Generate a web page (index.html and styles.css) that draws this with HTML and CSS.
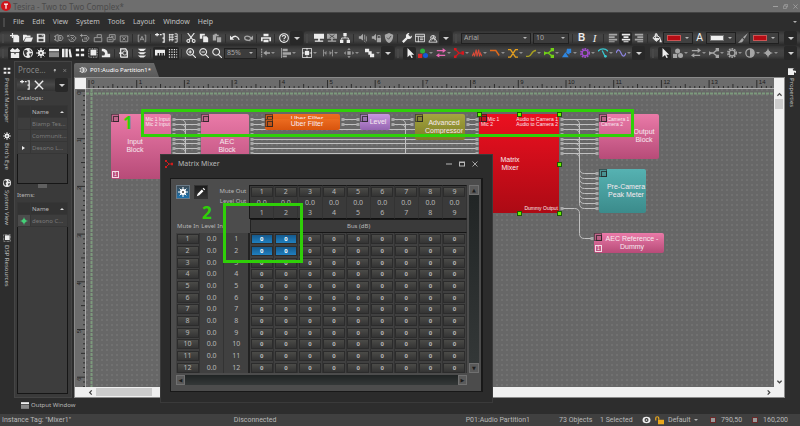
FILE: index.html
```html
<!DOCTYPE html>
<html lang="en">
<head>
  <meta charset="UTF-8">
  <meta name="viewport" content="width=device-width, initial-scale=1.0">
  <title>Tesira - Two to Two Complex*</title>
  <link rel="stylesheet" href="styles.css">
</head>
<body>
  <!-- Icon set -->
  <svg class="sprite" aria-hidden="true">
    <symbol id="new" viewBox="0 0 12 12"><path d="M4 2h5l2 2v7H4z"/><path d="M3 0v6M0 3h6" stroke="currentColor" stroke-width="1.5"/></symbol>
    <symbol id="open" viewBox="0 0 12 12"><path d="M0 2h4l1 1h4v2H3L1 9H0z"/><path d="M3.500 5.500H12L10 10.500H1.200z"/></symbol>
    <symbol id="save" viewBox="0 0 12 12"><path fill-rule="evenodd" d="M1 1h9l1 1v9H1zM3 2v3h6V2zM3 7v3h6V7z"/><path d="M7 2h1v2H7z"/></symbol>
    <symbol id="blk" viewBox="0 0 12 12"><path fill="none" stroke="currentColor" d="M0 4h2M0 8h2M2 3l3-1v8L2 9zM6 3h3l2 3-2 3H6zM8 4.500v3"/></symbol>
    <symbol id="blkx" viewBox="0 0 12 12"><path fill="none" stroke="currentColor" d="M0 2l3 3M3 2L0 5M4 3h4l3 3-3 4H4L2 7M5 5l3 3M8 5L5 8"/></symbol>
    <symbol id="blkr" viewBox="0 0 12 12"><path fill="none" stroke="currentColor" d="M0 3h4M2 1v4M4 3h4l3 3-3 4H3V7M6 5v3M8 5v3"/></symbol>
    <symbol id="unlock" viewBox="0 0 12 12"><path fill="none" stroke="currentColor" d="M1.500 5.500h9v5h-9zM5 5V2h5v3"/></symbol>
    <symbol id="windows" viewBox="0 0 12 12"><path fill="none" stroke="currentColor" d="M1.500 5.500h7v5h-7zM4 5V2h7v6H9M6 4h3M3 8h4"/></symbol>
    <symbol id="boxx" viewBox="0 0 12 12"><path fill="none" stroke="currentColor" d="M1.500 3.500h9v7h-9zM4 5l4 4M8 5L4 9"/></symbol>
    <symbol id="boxa" viewBox="0 0 12 12"><path fill="none" stroke="currentColor" d="M3 2.500H1.500v8H3M9 2.500h1.500v8H9M3.500 9L6 4l2.500 5M4.500 7.500h3"/></symbol>
    <symbol id="addline" viewBox="0 0 12 12"><path fill="none" stroke="currentColor" stroke-width="1.500" d="M0 2h5M2.500 0v4M6 2h2M9 1h2v10H9M9 6h2"/></symbol>
    <symbol id="matrixi" viewBox="0 0 12 12"><path fill="none" stroke="currentColor" d="M1 2h6M1 5h6M1 8h6M2 1v9M5 1v9M8 1h3v10H8M8 4h3M8 7h3"/></symbol>
    <symbol id="cut" viewBox="0 0 12 12"><path fill="none" stroke="currentColor" stroke-width="1.300" d="M2 0l6 8M10 0L4 8"/><g fill="none" stroke="currentColor" stroke-width="1.300"><circle cx="2.800" cy="9.500" r="1.700"/><circle cx="9.200" cy="9.500" r="1.700"/></g></symbol>
    <symbol id="copy" viewBox="0 0 12 12"><path d="M1 1h6v2H4v4H1zM5 4h4l2 2v5H5z"/></symbol>
    <symbol id="paste" viewBox="0 0 12 12"><path d="M1 2h2V1h3v1h2v2H5v5H1zM6 5h5v6H6z"/></symbol>
    <symbol id="undo" viewBox="0 0 12 12"><path d="M0 3v5h5z"/><path fill="none" stroke="currentColor" stroke-width="1.600" d="M2 6c3-3 7-3 9 2"/></symbol>
    <symbol id="redo" viewBox="0 0 12 12"><path d="M12 3v5H7z"/><path fill="none" stroke="currentColor" stroke-width="1.600" d="M10 6C7 3 2 3 2 6s3 3 7 3"/></symbol>
    <symbol id="print" viewBox="0 0 12 12"><path d="M3 1h6v3H3zM0 5h12v5h-2V7H2v3H0zM3 8h6v3H3z"/></symbol>
    <symbol id="help" viewBox="0 0 12 12"><circle cx="6" cy="6" r="5.200" fill="none" stroke="currentColor" stroke-width="1.300"/><path fill="none" stroke="currentColor" stroke-width="1.300" d="M4 4.500C4 2.500 8 2.500 8 4.600 8 6 6 5.800 6 7.500M6 8.500v1.200"/></symbol>
    <symbol id="pc" viewBox="0 0 12 12"><path d="M0 1h12v6H0zM5 7h2v2h4v1.500H1V9h4z"/></symbol>
    <symbol id="pcx" viewBox="0 0 12 12"><path d="M0 1h12v6H0zM5 7h2v2h4v1.500H1V9h4z"/><path d="M3 2l6 4M9 2L3 6" stroke="#444"/></symbol>
    <symbol id="net" viewBox="0 0 12 12"><path d="M4 0h4v4H4zM0 8h4v4H0zM8 8h4v4H8z"/><path fill="none" stroke="currentColor" d="M6 4v2M2 8V6h8v2"/></symbol>
    <symbol id="spk" viewBox="0 0 12 12"><path d="M1 4h2l3-3v8L3 7H1z"/><path fill="none" stroke="currentColor" d="M8 2v6M10 4v6M7 9l2 2"/></symbol>
    <symbol id="spkl" viewBox="0 0 12 12"><path d="M1 4h2l3-3v8L3 7H1zM7 6h5v5H7z"/><path fill="none" stroke="currentColor" d="M8 6V3h3v3"/></symbol>
    <symbol id="shield" viewBox="0 0 12 12"><path d="M6 0l5 2c0 5-1 8-5 10C2 10 1 7 1 2z"/><path fill="none" stroke="#444" d="M3.500 5.500l2 2 3-4"/></symbol>
    <symbol id="wrench" viewBox="0 0 12 12"><path d="M0 10l5-5c-1-3 1-5 4-5L7.500 2l2.500 2.500L12 3c0 3-2 5-5 4l-5 5z"/></symbol>
    <symbol id="grid" viewBox="0 0 12 12"><path fill="none" stroke="currentColor" d="M.5 1.500h11v9H.5zM.5 4h11M4 4v7M6 6h4M6 8h4"/></symbol>
    <symbol id="gauge" viewBox="0 0 12 12"><path fill="none" stroke="currentColor" d="M1 11l3-5h4l3 5zM3 6a3 3 0 1 1 6 0M6 3l2 6M4 9l2-3"/></symbol>
    <symbol id="left" viewBox="0 0 12 12"><path d="M1 1h10v2H1zM1 4h7v2H1zM1 7h10v2H1zM1 10h7v1H1z"/></symbol>
    <symbol id="center" viewBox="0 0 12 12"><path d="M1 1h10v2H1zM3 4h6v2H3zM1 7h10v2H1zM3 10h6v1H3z"/></symbol>
    <symbol id="right" viewBox="0 0 12 12"><path d="M1 1h10v2H1zM4 4h7v2H4zM1 7h10v2H1zM4 10h7v1H4z"/></symbol>
    <symbol id="bucket" viewBox="0 0 12 12"><path fill="none" stroke="currentColor" stroke-width="1.200" d="M5 2L1 6l4 4 5-4zM4 6V1h2v4"/><path d="M2 6h7l-4 4zM10 6l2 5H9z"/></symbol>
    <symbol id="brush" viewBox="0 0 12 12"><path d="M12 0L8 7 6 5zM5 6l2 2-2 3-5 1 2-2z"/></symbol>
    <symbol id="box" viewBox="0 0 12 12"><path d="M0 3l3-3 3 2 3-2 3 3-1 2H1zM1 6h4l1 2 1-2h4v6H1z"/></symbol>
    <symbol id="globe" viewBox="0 0 12 12"><circle cx="6" cy="6" r="6"/><path fill="#3b3b3b" d="M1 3l3-1 2 2-2 2 1 3-2 1-2-4zM8 1l3 4-3-1zM7 7l4-1-2 5z"/></symbol>
    <symbol id="burst" viewBox="0 0 12 12"><path stroke="currentColor" stroke-width="1.200" d="M6 0v12M0 6h12M2 2l8 8M10 2l-8 8"/><circle cx="6" cy="6" r="3.600"/><circle cx="6" cy="6" r="1.300" fill="#444"/></symbol>
    <symbol id="panel" viewBox="0 0 12 12"><path d="M0 1h12v3H0z"/><path fill="#888" d="M0 5h12v6H0z"/></symbol>
    <symbol id="books" viewBox="0 0 12 12"><path d="M0 1h3v10H0zM4 1h3v10H4zM8 2l2-1 2 10H9z"/></symbol>
    <symbol id="four" viewBox="0 0 12 12"><path d="M1 1h4v3H1zM7 1h4v3H7zM1 7h4v3H1zM7 7h4v3H7z"/></symbol>
    <symbol id="chip" viewBox="0 0 12 12"><path stroke="currentColor" stroke-dasharray="1 1" fill="none" d="M1 1h10v10H1z"/><path d="M3 2h7v7H3z"/></symbol>
    <symbol id="tray" viewBox="0 0 12 12"><path d="M1 1c5 0 7 2 7 6h3v4H1V9h3c2-3 0-5-3-5z"/></symbol>
    <symbol id="find" viewBox="0 0 12 12"><path fill="none" stroke="currentColor" stroke-width="1.500" d="M2 11V1h6l2 3v7H2M0 6h5"/><circle cx="7" cy="6" r="2.500" fill="#444" stroke="currentColor"/></symbol>
    <symbol id="layers" viewBox="0 0 12 12"><path d="M1 1h10L8 3.500H4zM1 5h10L8 7.500H4zM1 9h10l-3 2.500H4z"/></symbol>
    <symbol id="ruler" viewBox="0 0 12 12"><path d="M0 2h12v7h-1V6H9v3H8V6H6v3H5V6H3v3H0z"/></symbol>
    <symbol id="dots" viewBox="0 0 12 12"><path fill="none" stroke="currentColor" stroke-width="1.500" stroke-dasharray="1.500 1.500" d="M1 2h10M1 5h10M1 8h10M1 11h10"/></symbol>
    <symbol id="zin" viewBox="0 0 12 12"><path fill="none" stroke="currentColor" stroke-width="1.300" d="M5 .7a4 4 0 1 0 .01 0M8 8l4 4M3 4.700h4M5 2.700v4"/></symbol>
    <symbol id="zout" viewBox="0 0 12 12"><path fill="none" stroke="currentColor" stroke-width="1.300" d="M5 .7a4 4 0 1 0 .01 0M8 8l4 4M3 4.700h4"/></symbol>
    <symbol id="zoom" viewBox="0 0 12 12"><path fill="none" stroke="currentColor" stroke-width="1.300" d="M5 .7a4 4 0 1 0 .01 0M8 8l4 4"/></symbol>
    <symbol id="spread" viewBox="0 0 12 12"><path fill="none" stroke="currentColor" stroke-width="1.300" stroke-dasharray="2 1" d="M2 1v10"/><path d="M4 6l4-3v2h4v2H8v2z"/></symbol>
    <symbol id="alignl" viewBox="0 0 12 12"><path d="M0 0h1v12H0zM2 1h6v3H2zM2 5h10v3H2zM2 9h5v2H2z"/></symbol>
    <symbol id="centerbox" viewBox="0 0 12 12"><path fill="none" stroke="currentColor" d="M.5.5h11v11H.5zM6 0v3M6 9v3M0 6h3M9 6h3"/><path d="M3.500 3.500h5v5h-5z"/></symbol>
    <symbol id="width" viewBox="0 0 12 12"><path fill="none" stroke="currentColor" d="M.5 2v8M11.500 2v8M2 6h3M7 6h3M4 4L2 6l2 2M8 4l2 2-2 2"/></symbol>
    <symbol id="move" viewBox="0 0 12 12"><path d="M4 4h4v4H4zM6 0l2 2H4zM6 12l2-2H4zM0 6l2-2v4zM12 6l-2-2v4z"/></symbol>
    <symbol id="group" viewBox="0 0 12 12"><path d="M0 1h5v4H0zM6 7h5v4H6zM4 4h4v4H4z"/></symbol>
    <symbol id="pointer" viewBox="0 0 12 12"><path d="M3 0l8 8H7.500l2 3.500-1.800.5L6 8.500 3 11z"/></symbol>
    <symbol id="rgb" viewBox="0 0 12 12"><circle cx="5.500" cy="3.500" r="3" fill="#2eae3c"/><path fill="#d62828" d="M0 7h5v5H0z"/><circle cx="9" cy="9" r="3" fill="#1559d8"/></symbol>
    <symbol id="shapes" viewBox="0 0 12 12"><circle cx="5.500" cy="3.500" r="3"/><path d="M0 7h5v5H0z"/><circle cx="9" cy="9" r="3"/></symbol>
    <symbol id="swap" viewBox="0 0 12 12"><path d="M8 0l4 3-4 3V4H1V2.500h7zM4 6v2h7v1.500H4v2L0 9z"/></symbol>
    <symbol id="mix" viewBox="0 0 12 12"><path fill="none" stroke="currentColor" stroke-width="1.500" d="M1 1l5 5-5 5M6 6h6"/><path d="M0 0h3v3H0zM0 9h3v3H0zM9 4h3v4H9z"/></symbol>
    <symbol id="eq" viewBox="0 0 12 12"><path fill="none" stroke="currentColor" stroke-width="1.300" d="M0 10l2-4 1 4 2-8 1 8 2-8 1 8 1-4 2 4"/></symbol>
    <symbol id="slope" viewBox="0 0 12 12"><path fill="none" stroke="currentColor" stroke-width="1.700" d="M0 3h7l4 6"/></symbol>
    <symbol id="cross" viewBox="0 0 12 12"><path fill="none" stroke="currentColor" stroke-width="1.600" d="M0 2h3l6 9h3M0 11h3l6-9h3"/></symbol>
    <symbol id="curve" viewBox="0 0 12 12"><path fill="none" stroke="currentColor" stroke-width="1.600" d="M0 10h3c4 0 3-7 9-7"/></symbol>
    <symbol id="split" viewBox="0 0 12 12"><path fill="none" stroke="currentColor" stroke-width="1.600" d="M0 6h5l5-4M5 6l5 4"/><path d="M8 0h4v4H8zM8 8h4v4H8zM0 4l4 2-4 3z"/></symbol>
    <symbol id="pipe" viewBox="0 0 12 12"><path d="M0 11l4-6 4 6z"/><path d="M5 6l1-5h5v5H9v2z"/></symbol>
    <symbol id="cog" viewBox="0 0 12 12"><circle cx="6" cy="6" r="5" fill="none" stroke="currentColor" stroke-width="2" stroke-dasharray="2 1.200"/><circle cx="6" cy="6" r="3.500" fill="none" stroke="currentColor" stroke-width="1.600"/></symbol>
    <symbol id="meter" viewBox="0 0 12 12"><path fill="none" stroke="currentColor" stroke-width="1.500" d="M0 4c3-4 9-4 12 0M5 3l4 8"/><circle cx="9" cy="10" r="1.500"/></symbol>
    <symbol id="wave" viewBox="0 0 12 12"><path fill="none" stroke="currentColor" stroke-width="1.500" d="M0 6c2-5 4-5 6 0s4 5 6 0"/></symbol>
    <symbol id="half" viewBox="0 0 12 12"><circle cx="6" cy="6" r="5" fill="none" stroke="currentColor" stroke-width="1.500"/><path d="M6 1a5 5 0 0 1 0 10z"/></symbol>
    <symbol id="star" viewBox="0 0 12 12"><path d="M6 0l1.500 4.500L12 6 7.500 7.500 6 12 4.500 7.500 0 6l4.500-1.500z"/><circle cx="6" cy="6" r="3"/></symbol>
    <symbol id="pencil" viewBox="0 0 12 12"><path d="M1 11l1-3 5-5 2 2-5 5zM8 2l1-1 2 2-1 1z"/></symbol>
    <symbol id="pin" viewBox="0 0 12 12"><path d="M3 1h6v6h2v1H7v4H5V8H1V7h2z"/></symbol>
    <symbol id="close" viewBox="0 0 12 12"><path fill="none" stroke="currentColor" stroke-width="1.700" d="M1 1l10 10M11 1L1 11"/></symbol>
    <symbol id="min" viewBox="0 0 12 12"><path d="M0 5h12v2H0z"/></symbol>
    <symbol id="max" viewBox="0 0 12 12"><path fill-rule="evenodd" d="M0 1h12v10H0zM2 4v5h8V4z"/></symbol>
    <symbol id="restore" viewBox="0 0 12 12"><path fill="none" stroke="currentColor" stroke-width="1.500" d="M1 4.500h7V11H1zM4 4V1h7v6H8"/></symbol>
    <symbol id="props" viewBox="0 0 12 12"><path d="M0 2h9v3l3 1v3L9 8v4H0z"/><path fill="#333" d="M7 4l3-4 2 2-3 4z"/></symbol>
    <symbol id="eye" viewBox="0 0 12 12"><ellipse cx="6" cy="6" rx="6" ry="5"/><circle cx="6" cy="6" r="3" fill="#3a3a3a"/><circle cx="6" cy="6" r="1.300"/></symbol>
    <symbol id="padlock" viewBox="0 0 12 12"><path fill="none" stroke="currentColor" stroke-width="1.600" d="M1 6V2.500Q1 1 3 1t2 1.500V5"/><path d="M4 5h8v6H4z"/></symbol>
    <symbol id="up" viewBox="0 0 12 12"><path fill="none" stroke="currentColor" stroke-width="3" d="M1 9l5-5 5 5"/></symbol>
    <symbol id="down" viewBox="0 0 12 12"><path fill="none" stroke="currentColor" stroke-width="3" d="M1 4l5 5 5-5"/></symbol>
    <symbol id="lt" viewBox="0 0 12 12"><path fill="none" stroke="currentColor" stroke-width="3" d="M9 1L4 6l5 5"/></symbol>
    <symbol id="gt" viewBox="0 0 12 12"><path fill="none" stroke="currentColor" stroke-width="3" d="M4 1l5 5-5 5"/></symbol>
  </svg>

  <header class="titlebar">
    <span class="logo"><svg viewBox="0 0 10 10"><circle cx="5" cy="5" r="5" fill="#d0141a"/><path fill="#fff" d="M3 2.500h4v1.200H5.600v4H4.400v-4H3z"/></svg></span>
    <span class="app-title">Tesira - Two to Two Complex*</span>
    <button aria-label="Minimize"><svg><use href="#min"/></svg></button>
    <button aria-label="Restore"><svg><use href="#restore"/></svg></button>
    <button aria-label="Close"><svg><use href="#close"/></svg></button>
  </header>

  <nav class="menubar">
    <i class="grip"></i>
    <button>File</button><button>Edit</button><button>View</button><button>System</button><button>Tools</button><button>Layout</button><button>Window</button><button>Help</button>
    <span class="caret"></span>
  </nav>

  <!-- data-icons: "|" separator, "*" toggled on, "+" has a drop arrow, "~" dimmed -->
  <div class="toolbar">
    <div class="group">
      <i class="grip"></i>
      <div class="tools" data-icons="new open save | ~blk ~blkx ~blkr ~unlock ~windows ~boxx | ~boxa | addline matrixi | cut copy ~paste | undo ~redo | print | help"></div>
      <button class="more" aria-label="More file tools"></button>
    </div>
    <div class="group">
      <i class="grip"></i>
      <div class="tools" data-icons="pc ~pcx net | ~spk ~spkl ~shield | wrench grid gauge"></div>
      <button class="more" aria-label="More system tools"></button>
    </div>
    <div class="group fill">
      <i class="grip"></i>
      <span class="combo font"><select aria-label="Font"><option>Arial</option></select></span>
      <span class="combo size"><select aria-label="Size"><option>10</option></select></span>
      <i class="sep"></i>
      <button class="tool letter"><b>B</b></button>
      <button class="tool letter serif"><i>I</i></button>
      <div class="tools" data-icons="| ~left *center ~right | bucket"></div>
      <button class="swatch" aria-label="Fill color"><span class="red"></span></button>
      <button class="tool letter">A</button>
      <button class="swatch" aria-label="Text color"><span class="white"></span></button>
      <div class="tools" data-icons="~brush"></div>
      <button class="swatch" aria-label="Line color"><span class="red"></span></button>
      <button class="more" aria-label="More format tools"></button>
    </div>
  </div>
  <div class="toolbar objects-bar">
    <div class="group">
      <i class="grip"></i>
      <div class="tools" data-icons="*box *globe *burst *panel *books *four *chip tray | find | layers | *ruler *dots | zin zout zoom"></div>
      <span class="combo zoomlevel"><select aria-label="Zoom"><option>85%</option></select></span>
      <div class="tools layout" data-icons="~+spread ~+alignl +centerbox ~+width ~+move +group"></div>
      <button class="more" aria-label="More layout tools"></button>
    </div>
    <div class="group">
      <i class="grip"></i>
      <div class="tools" data-icons="*pointer +rgb +swap:pink +mix:red +eq:tomato +slope:orange +cross:amber +curve:olive +split:lime +pipe:blue +cog:purple +meter:cyan +wave:violet"></div>
      <button class="more" aria-label="More objects"></button>
    </div>
    <div class="group fill">
      <i class="grip"></i>
      <div class="tools" data-icons="*pointer ~+shapes ~+swap ~+split ~+cog ~+half ~+star"></div>
      <button class="more" aria-label="More controls"></button>
    </div>
  </div>

  <div class="workspace">
    <nav class="side left">
      <button><svg><use href="#four"/></svg>Preset Manager</button>
      <button><svg><use href="#burst"/></svg>Bird's Eye</button>
      <button><svg><use href="#globe"/></svg>System View</button>
      <button><svg><use href="#chip"/></svg>DSP Resources</button>
    </nav>

    <aside class="library">
      <header><span>Proce...</span><svg><use href="#pin"/></svg><svg><use href="#close"/></svg></header>
      <div class="library-tools">
        <button class="tool" aria-label="Add"><svg><use href="#addline"/></svg></button>
        <button class="tool" aria-label="Remove"><svg><use href="#close"/></svg></button>
        <button class="more" aria-label="More"></button>
      </div>
      <h2>Catalogs:</h2>
      <table class="list catalogs">
        <tr><th></th><th>Name <i class="sort"></i></th></tr>
        <tr><td></td><td>Biamp Tes...</td></tr>
        <tr><td></td><td>Communit...</td></tr>
        <tr><td><i class="play"></i></td><td>Desono L...</td></tr>
        <tr class="rest"><td></td><td></td></tr>
      </table>
      <i class="splitter"></i>
      <h2>Items:</h2>
      <table class="list items">
        <tr><th></th><th>Name <i class="sort"></i></th></tr>
        <tr><td class="mark"><svg><use href="#star"/></svg></td><td>desono C...</td></tr>
        <tr class="rest"><td></td><td></td></tr>
      </table>
    </aside>

    <main>
      <div class="tabs"><button class="tab"><svg><use href="#blk"/></svg>P01:Audio Partition1*</button></div>
      <div class="editor">
        <div class="corner"></div>
        <svg class="ruler-x"></svg>
        <div class="filler"></div>
        <svg class="ruler-y"></svg>
        <div class="canvas">
          <svg class="wires"></svg>
          <div class="block pink input"><i class="badge"></i><small>Mic 1 Input<br>Mic 2 Input</small><p>Input<br>Block</p><i class="count">1</i></div>
          <div class="block pink aec"><i class="badge"></i><p>AEC<br>Block</p></div>
          <div class="block orange uber-back"><i class="badge"></i><p>Uber Filter</p></div>
          <div class="block orange uber"><i class="badge"></i><p>Uber Filter</p></div>
          <div class="block purple level"><i class="badge"></i><p>Level</p></div>
          <div class="block olive compressor"><i class="badge"></i><p>Advanced<br>Compressor</p></div>
          <div class="block red matrix"><i class="badge"></i><small class="ins">&emsp;&nbsp;Mic 1<br>Mic 2</small><small>Audio to Camera 1<br>Audio to Camera 2</small><p>Matrix<br>Mixer</p><small class="dummy">Dummy Output</small>
            <b class="handle nw"></b><b class="handle n"></b><b class="handle ne"></b><b class="handle e"></b><b class="handle se"></b><b class="handle s"></b>
          </div>
          <div class="block pink output"><i class="badge"></i><small class="ins">&emsp;&nbsp;Camera 1<br>Camera 2</small><p>Output<br>Block</p></div>
          <div class="block teal peak"><i class="badge"></i><p>Pre-Camera<br>Peak Meter</p></div>
          <div class="block pink ref"><i class="badge"></i><p>AEC Reference -<br>Dummy</p><i class="count">1</i></div>
        </div>
        <div class="vscroll"><svg><use href="#up"/></svg><i></i><svg class="end"><use href="#down"/></svg></div>
        <div class="hscroll"><svg><use href="#lt"/></svg><i></i><svg class="end"><use href="#gt"/></svg></div>
      </div>

      <section class="dialog">
        <header>
          <svg class="mix-icon"><use href="#mix"/></svg><h1>Matrix Mixer</h1>
          <button aria-label="Minimize"><svg><use href="#min"/></svg></button>
          <button aria-label="Maximize"><svg><use href="#max"/></svg></button>
          <button aria-label="Close"><svg><use href="#close"/></svg></button>
        </header>
        <div class="dialog-body">
          <table class="mixer">
            <colgroup><col><col><col class="wide"><col span="9"></colgroup>
            <thead>
              <tr class="r-mute">
                <th colspan="3" rowspan="3" class="head">
                  <div>
                    <button class="square on" aria-label="Settings"><svg><use href="#burst"/></svg></button>
                    <button class="square" aria-label="Edit"><svg><use href="#pencil"/></svg></button>
                    <span>Mute Out<br>Level Out</span>
                  </div>
                </th>
              </tr>
              <tr class="r-level"></tr>
              <tr class="r-num"></tr>
              <tr class="r-bus"><th class="side-head">Mute In</th><th class="side-head">Level In</th><th class="side-head"></th><th colspan="9" class="bus">Bus (dB)</th></tr>
            </thead>
            <tbody></tbody>
          </table>
          <div class="bar vertical"><span>▲</span><span>▼</span></div>
          <div class="bar"><span>◀</span><span>▶</span></div>
        </div>
      </section>

      <div class="note note-1"></div><b class="note-label label-1">1</b>
      <div class="note note-2"></div><b class="note-label label-2">2</b>
    </main>

    <nav class="side right">
      <button><svg><use href="#props"/></svg>Properties</button>
    </nav>
  </div>

  <div class="dock"><button><svg><use href="#panel"/></svg>Output Window</button></div>

  <footer class="status">
    <span class="tag">Instance Tag: "Mixer1"</span>
    <span class="state">Disconnected</span>
    <span class="part">P01:Audio Partition1</span>
    <span class="objects">73 Objects</span>
    <span class="selected">1 Selected</span>
    <span class="layer"><svg class="eye"><use href="#eye"/></svg><svg class="lock"><use href="#padlock"/></svg>Default <i class="caret"></i></span>
    <span class="pos"><i class="dot"></i>790,50</span>
    <span class="dim"><i class="dot"></i>160,200</span>
  </footer>

  <script src="script.js"></script>
</body>
</html>
```

FILE: styles.css
```css
* {
  box-sizing: border-box;
}
body {
  margin: 0;
  min-height: 100vh;
  display: flex;
  flex-direction: column;
  background: #2d2d2d;
  color: #b8b8b8;
  font: 6px/8px "Noto Sans", "Open Sans", sans-serif;
  overflow: hidden;
}
button {
  background: none;
  border: 0;
  padding: 0;
  color: inherit;
  font: inherit;
}
svg {
  fill: currentColor;
  display: block;
}
.sprite {
  position: absolute;
  width: 0;
  height: 0;
}
.grip {
  width: 2px;
  height: 9px;
  background: #484848;
}
.caret {
  border: 2px solid transparent;
  border-top: 2px solid #b0b0b0;
  border-bottom: 0;
}

/* Title and menu */
.titlebar {
  height: 12px;
  background: #6e6e6e;
  display: flex;
  align-items: center;
  gap: 5px;
  padding: 0 2px 0 1px;
}
.titlebar svg {
  width: 5px;
  height: 5px;
  color: #aaa;
}
.titlebar .logo svg {
  width: 10px;
  height: 10px;
}
.app-title {
  flex: 1;
  margin-left: -3px;
  padding-top: 1px;
  font-size: 8px;
  color: #4b4b4b;
}
.menubar {
  height: 19px;
  display: flex;
  align-items: center;
  gap: 8px;
  padding: 0 3px;
  font-size: 7px;
  color: #c2c2c2;
  border-top: 1px solid #444;
}
.menubar .caret {
  margin-left: auto;
}

/* Toolbars */
.toolbar {
  height: 15px;
  display: flex;
  gap: 1px;
}
.objects-bar .fill {
  margin-left: 4px;
}
.group {
  height: 14px;
  display: flex;
  align-items: center;
  background: linear-gradient(#333, #444 30%, #414141 70%, #2a2a2a);
  border-radius: 3px;
}
.group .grip {
  margin: 0 4px 0 2px;
}
.group.fill {
  flex: 1;
}
.tools {
  display: flex;
  align-items: center;
}
.layout {
  width: 123px;
  justify-content: space-between;
}
.tool {
  width: 13px;
  height: 13px;
  display: flex;
  align-items: center;
  justify-content: center;
  color: #ececec;
}
.tool svg {
  width: 10px;
  height: 10px;
}
.tool.dim {
  color: #a6a6a6;
}
.tool.on {
  background: #262626;
  border-radius: 2px;
}
.tool.drop {
  width: 18px;
  justify-content: space-between;
  padding: 0 1px 0 2px;
}
.tool.letter {
  font: 10px/12px "Liberation Sans", Arial, sans-serif;
}
.tool.serif {
  font-family: "Liberation Serif", serif;
  font-size: 11px;
}
.tool .caret {
  border-width: 2px 2px 0;
  opacity: .7;
}
.pink-icon { color: #e868b4; }
.red-icon { color: #d8161c; }
.tomato-icon { color: #d84a38; }
.orange-icon { color: #e06a1c; }
.amber-icon { color: #e6a01e; }
.olive-icon { color: #a8a020; }
.lime-icon { color: #72d018; }
.blue-icon { color: #2f86e0; }
.purple-icon { color: #a44cd0; }
.cyan-icon { color: #38c8d0; }
.violet-icon { color: #8c84e0; }
.sep {
  width: 1px;
  height: 9px;
  margin: 0 2px;
  background: #2e2e2e;
}
.more {
  width: 13px;
  height: 14px;
  background: #282828;
  border-radius: 2px;
  display: flex;
  align-items: center;
  justify-content: center;
}
.more::after {
  content: "";
  border: 3px solid transparent;
  border-top: 3px solid #d0d0d0;
  border-bottom: 0;
}
.group.fill .more {
  margin-left: auto;
  margin-right: 3px;
}
.combo {
  position: relative;
  height: 11px;
  border: 1px solid #202020;
  background: #3c3c3c;
}
.combo::after {
  content: "";
  position: absolute;
  right: 3px;
  top: 3px;
  border: 2px solid transparent;
  border-top: 2px solid #b8b8b8;
  border-bottom: 0;
}
.combo select {
  appearance: none;
  width: 100%;
  height: 9px;
  display: block;
  border: 0;
  background: none;
  color: #a8a8a8;
  font: 7px/8px "Noto Sans", sans-serif;
  padding: 0 2px;
}
.font { width: 70px; margin-right: 2px; }
.size { width: 36px; margin-right: 1px; }
.zoomlevel { width: 33px; margin: 0 1px; }
.swatch {
  flex: none;
  width: 30px;
  height: 12px;
  border: 1px solid #202020;
  background: #404040;
  display: flex;
  align-items: center;
  justify-content: space-between;
  padding: 0 3px;
}
.swatch::after {
  content: "";
  border: 2px solid transparent;
  border-top: 2px solid #b8b8b8;
  border-bottom: 0;
}
.swatch span {
  width: 14px;
  height: 6px;
  border: 1px solid #777;
}
.swatch .red { background: #b40c14; border-color: #c55; }
.swatch .white { background: #f0f0f0; }

/* Workspace */
.workspace {
  flex: 1;
  display: flex;
}
.side {
  width: 14px;
  display: flex;
  flex-direction: column;
  padding-top: 6px;
  gap: 9px;
}
.side button {
  writing-mode: vertical-rl;
  display: flex;
  align-items: center;
  gap: 3px;
  width: 13px;
}
.side svg {
  width: 8px;
  height: 8px;
  color: #eee;
}
.right {
  width: 15px;
}
.library {
  width: 58px;
  border: 1px solid #454545;
  background: #3a3a3a;
  display: flex;
  flex-direction: column;
  padding: 0 3px 3px 2px;
}
.library > header {
  height: 16px;
  display: flex;
  align-items: center;
  gap: 7px;
  font-size: 8px;
  color: #858585;
  background: #333;
  margin: 0 -3px 0 -2px;
  padding: 0 4px 0 3px;
}
.library > header span { flex: 1; }
.library > header svg {
  width: 5px;
  height: 5px;
  color: #aaa;
}
.library-tools {
  height: 13px;
  display: flex;
  background: linear-gradient(#333, #484848, #333);
}
.library-tools .more { margin-left: auto; }
.library-tools .tool { margin-left: 1px; }
.library h2 {
  margin: 3px 0;
  font: inherit;
}
.list {
  width: 100%;
  table-layout: fixed;
  border-collapse: collapse;
  border: 1px solid #161616;
  background: #3d3d3d;
  color: #7a7a7a;
}
.list th, .list td {
  height: 12px;
  padding: 0 0 0 1px;
  text-align: left;
  font-weight: normal;
  white-space: nowrap;
  border: 1px solid #363636;
}
.list th {
  background: #333;
  color: #bababa;
}
.list th:first-child, .list td:first-child {
  width: 13px;
}
.list .rest td { border: 0; height: auto; }
.catalogs { height: 79px; }
.items { flex: 1; height: 195px; }
.sort {
  float: right;
  margin: 3px 3px 0 0;
  border: 2px solid transparent;
  border-bottom: 2px solid #ddd;
  border-top: 0;
}
.play {
  display: block;
  margin-left: 3px;
  width: 0;
  border: 2px solid transparent;
  border-left: 3px solid #eee;
  border-right: 0;
}
.list .mark { background: #4b4b4b; }
.mark svg {
  width: 8px;
  height: 8px;
  margin-left: 1px;
  color: #45d078;
}
.splitter {
  width: 9px;
  height: 4px;
  flex: none;
  margin: 0 auto;
  background: #606060;
}

/* Editor */
main {
  position: relative;
  flex: 1;
  display: flex;
  flex-direction: column;
  margin-left: 2px;
}
.tabs { height: 16px; }
.tab {
  height: 14px;
  margin-top: 2px;
  padding: 0 8px 0 5px;
  display: flex;
  align-items: center;
  gap: 2px;
  background: linear-gradient(#696969, #5a5a5a);
  clip-path: polygon(0 0, 94% 0, 100% 100%, 0 100%);
  border-radius: 2px 0 0 0;
  color: #fff;
}
.tab svg {
  width: 9px;
  height: 8px;
}
.editor {
  flex: 1;
  display: grid;
  grid-template: 11px 1fr 10px / 11px 1fr 10px;
  border: 1px solid #8a8a8a;
}
.corner, .filler {
  background: #f0f0f0;
}
.ruler-x, .ruler-y {
  width: 100%;
  height: 100%;
  background: #6c6c6c;
  stroke: #2c2c2c;
  overflow: hidden;
}
.ruler-x { border-bottom: 1px solid #aaa; }
.ruler-y { border-right: 1px solid #aaa; }
.ruler-x text, .ruler-y text {
  font: 6px "Liberation Sans", Arial, sans-serif;
  fill: #1c1c1c;
  stroke: none;
}
.canvas {
  position: relative;
  overflow: hidden;
  background-color: #676767;
  background-image: radial-gradient(circle at 1px 1px, #717171 1px, transparent 1px);
  background-size: 5px 5px;
}
.wires {
  position: absolute;
  width: 100%;
  height: 100%;
}
.vscroll, .hscroll {
  display: flex;
  align-items: center;
  background: #f0f0f0;
  color: #444;
}
.vscroll {
  flex-direction: column;
  padding: 3px 0;
}
.hscroll {
  grid-column: 1 / 4;
  padding: 0 13px;
}
.vscroll svg, .hscroll svg {
  width: 5px;
  height: 5px;
}
.vscroll i {
  width: 8px;
  height: 10px;
  margin-top: 2px;
  background: #cdcdcd;
}
.hscroll i {
  width: 56px;
  height: 8px;
  margin-left: 3px;
  background: #cdcdcd;
}
.vscroll .end { margin-top: auto; }
.hscroll .end { margin-left: auto; }

/* Diagram blocks */
.block {
  position: absolute;
  border-radius: 2px;
  color: #f8eaf0;
  font: 7px/8px "Liberation Sans", Arial, sans-serif;
}
.block p {
  position: absolute;
  margin: 0;
  text-align: center;
  white-space: nowrap;
  transform: translate(-50%, -50%);
}
.block small {
  position: absolute;
  top: 3px;
  right: 1px;
  font-size: 5px;
  line-height: 5px;
  text-align: right;
  white-space: nowrap;
}
.block .ins {
  right: auto;
  left: 2px;
  text-align: left;
}
.block .dummy {
  top: auto;
  bottom: 2px;
}
.badge {
  position: absolute;
  left: 0;
  top: 0;
  width: 8px;
  height: 8px;
  border: 1px solid #2228;
  background: #2223;
}
.badge::after {
  content: "";
  position: absolute;
  left: 1px;
  top: 1px;
  width: 4px;
  height: 4px;
  border: 1px solid #222b;
}
.count {
  position: absolute;
  left: 1px;
  bottom: 1px;
  width: 7px;
  height: 7px;
  border: 1px solid #f4dce6;
  font: 5px/5px "Liberation Sans", sans-serif;
  text-align: center;
}
.pink { background: linear-gradient(#ea7aa8, #b74b78); }
.orange { background: linear-gradient(#ec6c20, #d8540e); }
.purple { background: linear-gradient(#c896e0, #9464b0); }
.olive { background: linear-gradient(#a4a440, #7c7c24); }
.block.red { background: linear-gradient(#ec1020, #ac0a14); border-radius: 0; }
.teal { background: linear-gradient(#56b2b2, #3b8b8b); }
.input { left: 25px; top: 25px; width: 60px; height: 65px; }
.input p { left: 24px; top: 32px; }
.aec { left: 115px; top: 25px; width: 48px; height: 65px; }
.aec p { left: 26px; top: 32px; }
.uber-back { left: 179px; top: 25px; width: 75px; height: 15px; }
.uber { left: 179px; top: 30px; width: 75px; height: 11px; }
.uber-back p, .uber p { left: 42px; top: 5px; }
.level { left: 274px; top: 25px; width: 30px; height: 16px; }
.level p { left: 18px; top: 8px; }
.compressor { left: 329px; top: 25px; width: 50px; height: 26px; }
.compressor p { left: 29px; top: 13px; }
.matrix { left: 393px; top: 25px; width: 80px; height: 99px; }
.matrix p { left: 31px; top: 50px; }
.output { left: 513px; top: 25px; width: 60px; height: 45px; }
.output p { left: 45px; top: 22px; }
.peak { left: 513px; top: 80px; width: 47px; height: 44px; }
.peak p { left: 27px; top: 22px; }
.ref { left: 508px; top: 144px; width: 70px; height: 20px; }
.ref p { left: 38px; top: 10px; }
.handle {
  position: absolute;
  width: 5px;
  height: 5px;
  margin: -2px;
  background: #6cf000;
  border: 1px solid #1a5a08;
}
.nw { left: 0; top: 0; }
.n { left: 50%; top: 0; }
.ne { left: 100%; top: 0; }
.e { left: 100%; top: 50%; }
.se { left: 100%; top: 100%; }
.s { left: 50%; top: 100%; }

/* Matrix mixer dialog */
.dialog {
  position: absolute;
  left: 86px;
  top: 93px;
  width: 333px;
  padding: 0 9px 10px;
  background: #2b2b2b;
  border: 1px solid #3a3a3a;
}
.dialog > header {
  height: 23px;
  display: flex;
  align-items: center;
  gap: 7px;
  padding: 0 5px 5px 0;
}
.dialog > header svg {
  width: 6px;
  height: 6px;
}
.dialog > header .mix-icon {
  width: 8px;
  height: 8px;
  margin: 0 -2px 0 -5px;
  color: #d01c1c;
}
.dialog h1 {
  flex: 1;
  margin: 0;
  font-size: 7px;
  font-weight: normal;
}
.dialog-body {
  display: grid;
  grid-template-columns: 291px 10px;
  gap: 2px;
  padding: 6px 5px 6px;
  background: #4c4c4c;
  border: 1px solid #181818;
  border-right-width: 2px;
}
.mixer {
  width: 291px;
  table-layout: fixed;
  border-collapse: separate;
  border-spacing: 0;
  background: #3a3a3a;
  font-size: 7px;
}
.mixer col { width: 24px; }
.mixer .wide { width: 26px; }
.mixer th, .mixer td {
  padding: 0;
  font-weight: normal;
  text-align: center;
  border-right: 1px solid #333;
  white-space: nowrap;
}
.mixer td:nth-child(3) { border-right: 2px solid #222; }
.mixer .head, .mixer .side-head {
  background: #4c4c4c;
  border: 0;
  font-size: 6px;
}
.mixer .head {
  vertical-align: top;
  border-right: 1px solid #181818;
}
.head div {
  display: flex;
  gap: 4px;
}
.head span {
  margin-left: auto;
  padding: 1px 3px 0 0;
  text-align: right;
  line-height: 10px;
}
.square {
  width: 14px;
  height: 14px;
  display: flex;
  align-items: center;
  justify-content: center;
  background: linear-gradient(#1c1c1c, #333);
  border: 1px solid #333;
  color: #fff;
}
.square.on {
  background: linear-gradient(#3c4a54, #1d72ae);
  border-color: #6a7a88;
}
.square svg {
  width: 10px;
  height: 10px;
}
.r-mute { height: 13px; }
.r-level { height: 10px; }
.r-num { height: 11px; }
.r-num th { border-bottom: 1px solid #111; }
.r-mute th + th { border-top: 1px solid #181818; }
.r-bus { height: 14px; }
.mixer .bus {
  border-bottom: 1px solid #161616;
  border-top: 1px solid #161616;
  border-left: 1px solid #222;
  font-size: 6px;
}
.mixer tbody td { background: #404040; }
.cell {
  display: block;
  width: 22px;
  height: 10px;
  margin: 0 auto;
  background: linear-gradient(#4b4b48, #343434);
  border: 1px solid #2c2c2c;
  line-height: 8px;
}
.gain {
  font-weight: bold;
  font-size: 6px;
}
.gain.on {
  background: linear-gradient(#15598c, #2080c0);
  color: #fff;
}
.bar {
  height: 10px;
  display: flex;
  justify-content: space-between;
  background: linear-gradient(#202424, #343838);
}
.bar span {
  width: 9px;
  height: 10px;
  background: #5a5a5a;
  border: 1px solid #707070;
  color: #1c1c1c;
  font: 5px/8px "DejaVu Sans", sans-serif;
  text-align: center;
}
.bar.vertical {
  height: auto;
  flex-direction: column;
}
.bar.vertical span { width: 10px; }

/* Green call-outs */
.note {
  position: absolute;
  border: 3px solid #2fd008;
}
.note-1 { left: 67px; top: 48px; width: 493px; height: 28px; }
.note-2 { left: 149px; top: 142px; width: 80px; height: 60px; }
.note-label {
  position: absolute;
  color: #2fd008;
  font: bold 17px/14px "Open Sans", sans-serif;
}
.label-1 { left: 49px; top: 55px; }
.label-2 { left: 128px; top: 145px; }

/* Bottom */
.dock {
  height: 16px;
  display: flex;
  align-items: center;
  padding: 0 21px 2px;
}
.dock button {
  display: flex;
  align-items: center;
  gap: 2px;
}
.dock svg {
  width: 8px;
  height: 9px;
  color: #eee;
}
.status {
  height: 12px;
  display: flex;
  align-items: center;
  background: #404040;
  padding: 0 12px 0 2px;
  font: 7px/8px Roboto, "Noto Sans", sans-serif;
  white-space: nowrap;
}
.status span {
  display: flex;
  align-items: center;
}
.tag { flex: 231; }
.state { flex: 231; }
.part { flex: 93; }
.objects { width: 41px; }
.selected { width: 42px; }
.status .layer {
  width: 68px;
  gap: 4px;
}
.status .eye {
  width: 9px;
  height: 8px;
  color: #eee;
}
.status .lock {
  width: 9px;
  height: 9px;
  color: #eaa81e;
}
.status .pos { width: 42px; }
.dot {
  width: 6px;
  height: 6px;
  margin-right: 5px;
  background: #999;
  border: 1px solid #6a2a2a;
}
```

FILE: script.js
```js
// Toolbars
document.querySelectorAll('[data-icons]').forEach(bar => {
  bar.innerHTML = bar.dataset.icons.split(' ').map(item => {
    if (item === '|') return '<i class="sep"></i>';
    const [name, color] = item.replace(/[*+~]/g, '').split(':');
    let cls = 'tool';
    if (item.includes('*')) cls += ' on';
    if (item.includes('~')) cls += ' dim';
    if (item.includes('+')) cls += ' drop';
    const caret = item.includes('+') ? '<i class="caret"></i>' : '';
    return `<button class="${cls}" aria-label="${name}"><svg class="${color ? color + '-icon' : ''}"><use href="#${name}"/></svg>${caret}</button>`;
  }).join('');
});

// Rulers: ten ticks per unit
const UNIT = 47.7;
function ruler(count, draw) {
  let out = '';
  for (let i = 0; i < count; i++) {
    const size = i % 10 === 0 ? 8 : i % 5 === 0 ? 4 : 2;
    out += draw(3 + i * UNIT / 10, size, i % 10 === 0 ? i / 10 : '');
  }
  return out;
}
document.querySelector('.ruler-x').innerHTML = ruler(145, (p, size, label) =>
  `<path d="M${p} 10v-${size}"/>` + (label === '' ? '' : `<text x="${p + 2}" y="6">${label}</text>`));
document.querySelector('.ruler-y').innerHTML = ruler(63, (p, size, label) =>
  `<path d="M10 ${p - 1}h-${size}"/>` + (label === '' ? '' : `<text transform="translate(6 ${p + 1}) rotate(-90)" text-anchor="middle">${label}</text>`));

// Wires between the blocks
const rows = [30, 35, 40, 45, 50, 54, 59, 64];
let wires = '';
let ports = '';
function wire(x1, x2, y) {
  wires += `M${x1} ${y}H${x2}`;
  ports += `M${x1 - 1} ${y}h3M${x2 - 2} ${y}h3`;
}
rows.forEach((y, i) => {
  wire(87, 113, y);
  wires += `M94 ${y}q5 0 5 5`;
  if (i < 2) {
    wire(165, 177, y);
    wire(256, 272, y);
    wire(306, 326, y);
    wire(381, 391, y);
    wires += `M314 ${y}q5 0 5 5`;
  } else {
    wire(165, 391, y);
  }
  wire(475, 511, y);
  wires += `M488 ${y}q5 0 5 5`;
  const meter = 84 + i * 5;
  wires += `M493 ${meter - 5}q0 5 5 5H511`;
  ports += `M509 ${meter}h3`;
});
wires += 'M99 35V70M319 35V70M493 35V114M475 119H488q5 0 5 5V144q0 5 5 5H506';
ports += 'M474 119h3M504 149h3';
document.querySelector('.wires').innerHTML =
  `<path d="M0 4.500H688M5.500 0V300" fill="none" stroke="#7c997c" stroke-width="2" stroke-dasharray="3 1"/>
   <g transform="translate(.5 .5)" fill="none">
     <path d="${wires}" stroke="#c0c0c0"/>
     <path d="${ports}" stroke="#a8a8a8" stroke-width="3"/>
   </g>`;

// Mixer table
const cols = [1, 2, 3, 4, 5, 6, 7, 8, 9];
const add = (sel, html) => document.querySelector(sel).insertAdjacentHTML('beforeend', html);
add('.r-mute', cols.map(c => `<th><button class="cell">${c}</button></th>`).join(''));
add('.r-level', cols.map(() => '<th>0.0</th>').join(''));
add('.r-num', cols.map(c => `<th>${c}</th>`).join(''));
for (let r = 1; r <= 12; r++) {
  const gains = cols.map(c => `<td><button class="cell gain${r < 3 && c < 3 ? ' on' : ''}">0</button></td>`).join('');
  add('.mixer tbody', `<tr><td><button class="cell">${r}</button></td><td>0.0</td><td>${r}</td>${gains}</tr>`);
}
document.querySelectorAll('.mixer tbody tr').forEach((tr, i) => {
  tr.style.height = (i % 3 === 2 ? 11 : 12) + 'px';
});
```
